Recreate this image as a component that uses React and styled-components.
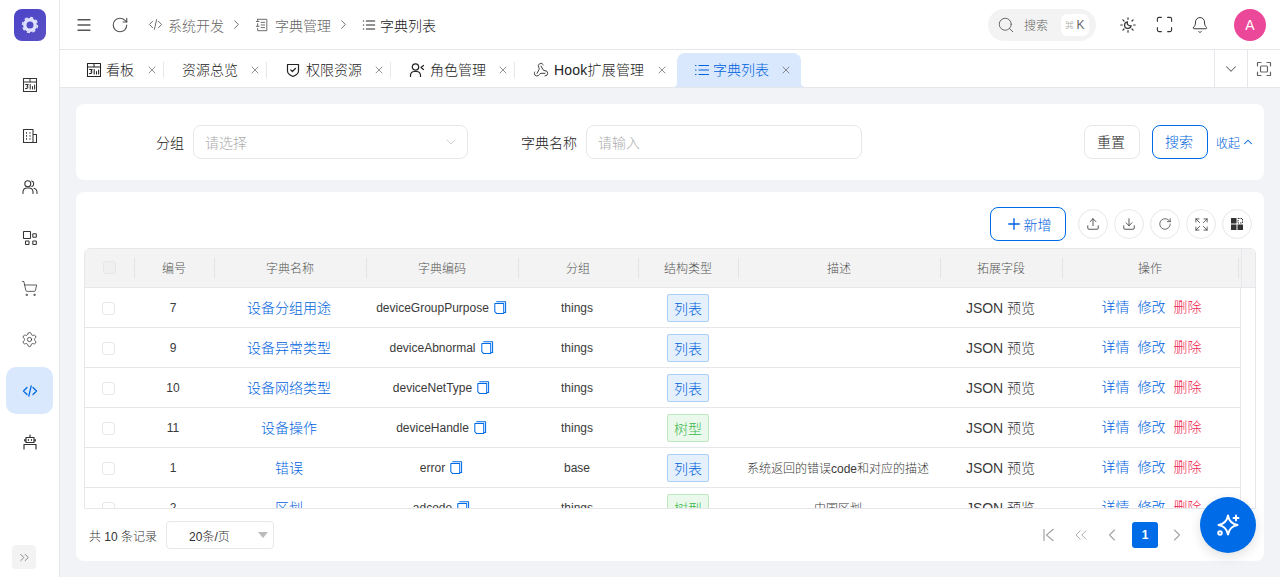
import React from 'react';
import styled, { createGlobalStyle } from 'styled-components';
import {
  Menu, RotateCw, ChevronRight, ChevronDown, ChevronUp, ChevronLeft, ChevronsLeft, ChevronsRight, X, Search, Maximize, Bell,
  Webhook, ShoppingCart, Settings, Upload, Download, Expand, Plus,
} from 'lucide-react';

const BLUE = '#006be6';
const TEXT_BLUE = '#0063de';
const Global = createGlobalStyle`
  html, body { margin: 0; padding: 0; background: #fff; }
  body { font-family: "Liberation Sans", "Noto Sans CJK SC", sans-serif; font-weight: 300; color: #333; }
  * { box-sizing: border-box; }
  svg { flex: none; }
`;

const Shell = styled.div`display: flex; width: 1280px; height: 577px; overflow: hidden; position: relative;`;
const Sidebar = styled.aside`width: 60px; flex: none; border-right: 1px solid #e5e7eb; display: flex; flex-direction: column; align-items: center; padding-top: 9px; position: relative; color: #333;`;
const Logo = styled.div`width: 32px; height: 32px; border-radius: 8px; background: linear-gradient(135deg, #4b44c9, #5a4fc4); display: flex; align-items: center; justify-content: center; margin-bottom: 20px; margin-left: 1px;`;
const SideItem = styled.div`
  width: 47px; height: 47px; flex: none; margin-bottom: 4px; border-radius: 10px; display: flex; align-items: center; justify-content: center;
  background: ${p => (p.$active ? '#d9e8fc' : 'transparent')}; color: ${p => (p.$active ? BLUE : '#333')};
`;
const CollapseBtn = styled.div`position: absolute; left: 12px; bottom: 8px; width: 24px; height: 24px; border-radius: 4px; background: #f3f3f3; color: #888; display: flex; align-items: center; justify-content: center;`;

const Main = styled.main`flex: 1; min-width: 0; display: flex; flex-direction: column;`;
const Header = styled.header`height: 50px; flex: none; border-bottom: 1px solid #e5e7eb; display: flex; align-items: center; padding: 0 14px 0 17px;`;
const HeadBtn = styled.div`width: 14px; display: flex; justify-content: center; color: #555; margin-right: ${p => p.$mr || 0}px;`;
const Crumbs = styled.nav`display: flex; align-items: center; font-size: 14px; flex: 1; color: #666;`;
const Crumb = styled.span`display: flex; align-items: center; gap: ${p => p.$gap || 5}px; color: ${p => (p.$current ? '#222' : '#666')};`;
const CrumbSep = styled.span`display: flex; width: 24px; justify-content: center; margin-right: 7px; color: #666;`;
const SearchPill = styled.div`width: 108px; height: 32px; border-radius: 16px; background: #f3f3f3; display: flex; align-items: center; padding-left: 9px; font-size: 12px; color: #666; margin-right: 25px;`;
const PillText = styled.span`margin-left: 9px;`;
const Kbd = styled.span`width: 28px; height: 22px; margin-left: 13px; border-radius: 6px; background: #fff; display: flex; align-items: center; justify-content: center; gap: 3px; font-size: 12px; color: #666;`;
const KbdMark = styled.span`font-size: 8px;`;
const ToolIcon = styled.div`width: 14px; display: flex; justify-content: center; color: #333; margin-right: ${p => p.$mr || 22}px;`;
const Avatar = styled.div`width: 32px; height: 32px; border-radius: 50%; background: #ec4899; color: #fff; font-size: 14px; font-weight: 400; display: flex; align-items: center; justify-content: center; margin-left: -2px;`;

const TabBar = styled.div`height: 38px; flex: none; border-bottom: 1px solid #e5e7eb; display: flex; padding-left: 8px;`;
const TabList = styled.div`flex: 1; display: flex; align-items: flex-end;`;
const Tab = styled.div`
  height: ${p => (p.$active ? 34 : 37)}px; display: flex; align-items: center; padding: ${p => (p.$active ? '0 9px 1px 17px' : `2px ${p.$pr || 6}px 0 18px`)};
  font-size: 14px; position: relative; flex: none; width: ${p => p.$w}px;
  color: ${p => (p.$active ? TEXT_BLUE : '#222')};
  background: ${p => (p.$active ? '#d9e8fc' : 'transparent')};
  border-radius: ${p => (p.$active ? '8px 8px 0 0' : '0')};
  &::after { content: ''; display: ${p => (p.$divider ? 'block' : 'none')}; position: absolute; right: 0; top: 12px; height: 16px; width: 1px; background: #e5e7eb; }
`;
const TabFlare = styled.span`
  position: absolute; bottom: 0; width: 5px; height: 5px;
  ${p => (p.$side === 'left' ? 'left: -5px;' : 'right: -5px;')}
  background: radial-gradient(circle at ${p => (p.$side === 'left' ? '0 0' : '100% 0')}, transparent 5px, #d9e8fc 5.500px);
`;
const TabText = styled.span`flex: 1; white-space: nowrap; margin-left: ${p => p.$gap}px; padding-bottom: 2px; letter-spacing: ${p => p.$track || 0}px;`;
const TabClose = styled.span`display: flex; width: 12px; justify-content: center; color: #444;`;
const TabTool = styled.div`width: 33px; flex: none; border-left: 1px solid #e5e7eb; display: flex; align-items: center; justify-content: center; color: #666;`;

const Content = styled.div`flex: 1; min-height: 0; background: #f1f3f7; padding: 16px; display: flex; flex-direction: column; gap: 12px;`;
const FormPanel = styled.section`height: 76px; flex: none; background: #fff; border-radius: 8px; display: flex; align-items: center; padding-right: 10px;`;
const Field = styled.div`width: ${p => p.$w}px; display: flex; align-items: center; font-size: 14px;`;
const FieldLabel = styled.label`width: ${p => p.$w}px; text-align: right; margin-right: 9px; color: #222; flex: none;`;
const Control = styled.div`flex: 1; height: 34px; border: 1px solid #e5e7eb; border-radius: 8px; display: flex; align-items: center; justify-content: space-between; padding: 0 8px 0 11px; color: #aaa;`;
const FormActions = styled.div`margin-left: auto; display: flex; align-items: center;`;
const FormBtn = styled.button`
  width: 56px; height: 34px; border-radius: 8px; background: #fff; font: inherit; font-size: 14px; padding: 0 2px 2px 0; margin-right: ${p => p.$mr}px;
  border: 1px solid ${p => (p.$primary ? BLUE : '#e5e7eb')}; color: ${p => (p.$primary ? TEXT_BLUE : '#222')};
`;
const Collapse = styled.span`display: flex; align-items: center; gap: 1px; color: ${TEXT_BLUE}; font-size: 12px; width: 38px; white-space: nowrap;`;

const TablePanel = styled.section`flex: 1; min-height: 0; background: #fff; border-radius: 8px; padding: 15px 8px 0; display: flex; flex-direction: column; position: relative;`;
const Toolbar = styled.div`display: flex; align-items: center; justify-content: flex-end; height: 34px; flex: none; padding-right: 4px; gap: 6px; margin-bottom: 7px;`;
const AddBtn = styled.button`width: 76px; height: 34px; margin-right: 6px; border: 1px solid ${BLUE}; border-radius: 8px; background: #fff; color: ${TEXT_BLUE}; font: inherit; font-size: 14px; display: flex; align-items: center; justify-content: center; gap: 1px; padding: 0;`;
const RoundBtn = styled.div`width: 30px; height: 30px; border: 1px solid #e5e7eb; border-radius: 50%; display: flex; align-items: center; justify-content: center; color: #333;`;

const TableWrap = styled.div`height: 261px; flex: none; overflow: hidden; border: 1px solid #e5e7eb; border-radius: 6px 6px 0 0;`;
const COLS = '50px 80px 152px 152px 120px 100px 202px 122px 176px';
const HeadRow = styled.div`display: grid; grid-template-columns: ${COLS} 2px 1fr; height: 39px; background: #f3f3f3; border-bottom: 1px solid #e5e7eb; font-size: 12px; color: #555;`;
const HeadCell = styled.div`
  display: flex; align-items: center; justify-content: center; padding: 0 2px 1px 0; position: relative;
  &::after { content: ''; position: absolute; right: 0; top: 9px; height: 20px; width: 1px; background: #e3e3e3; }
`;
const HeadFill = styled.div`grid-column: 11; border-left: 1px solid #e5e7eb;`;
const BodyRow = styled.div`display: grid; grid-template-columns: ${COLS} 2px; width: 1156px; height: 40px; border-bottom: 1px solid #e5e7eb; border-right: 1px solid #e5e7eb; font-size: 12px; color: #333;`;
const Cell = styled.div`
  display: flex; align-items: center; justify-content: center; padding: 0 ${p => p.$pr ?? 4}px ${p => (p.$size ? 2 : 0)}px 0;
  font-size: ${p => p.$size || 12}px; gap: 3px; white-space: nowrap; color: ${p => p.$color || '#3a3a3a'};
`;
const Check = styled.span`width: 13px; height: 13px; margin-top: ${p => (p.$head ? 0 : 2)}px; border: 1px solid #e5e7eb; border-radius: 3px; background: ${p => (p.$head ? '#f0f0f0' : '#fff')};`;
const Tag = styled.span`
  width: 42px; height: 28px; border-radius: 2px; font-size: 14px; margin-left: 2px; display: flex; align-items: center; justify-content: center;
  border: 1px solid ${p => (p.$tree ? '#bce8c0' : '#aacff8')};
  background: ${p => (p.$tree ? '#ebf9ed' : '#e5f0fd')};
  color: ${p => (p.$tree ? '#3fba50' : TEXT_BLUE)};
`;
const Ops = styled.div`display: flex; align-items: center; justify-content: center; gap: 8px; font-size: 14px; padding: 0 0 3px 1px;`;
const Op = styled.span`color: ${p => (p.$danger ? '#f0244e' : TEXT_BLUE)};`;
const CopyWrap = styled.span`color: ${BLUE}; display: flex;`;

const Footer = styled.div`flex: 1; display: flex; align-items: center; padding-left: 5px; font-size: 12px; color: #333;`;
const PageSize = styled.div`width: 108px; height: 28px; margin-left: 9px; border: 1px solid #e5e7eb; border-radius: 4px; display: flex; align-items: center; padding: 0 0 0 22px; position: relative;`;
const Caret = styled.span`position: absolute; right: 5px; top: 10px; width: 0; height: 0; border: 5px solid transparent; border-top: 6px solid #bbb; border-bottom: 0;`;
const Pager = styled.div`display: flex; align-items: center; margin: 0 70px 0 auto; color: #a5a5a5;`;
const PageIcon = styled.span`width: 18px; display: flex; justify-content: center; margin-right: ${p => p.$mr}px;`;
const PageNum = styled.span`width: 26px; height: 26px; border-radius: 3px; background: ${BLUE}; color: #fff; font-weight: 700; display: flex; align-items: center; justify-content: center; margin-right: 10px;`;
const Fab = styled.div`position: absolute; left: 1200px; top: 497px; width: 56px; height: 56px; border-radius: 50%; background: ${BLUE}; box-shadow: 0 4px 12px rgba(0,0,0,.12); display: flex; align-items: center; justify-content: center;`;

const Ico = ({ size = 16, sw = 1.2, children }) => (
  <svg width={size} height={size} viewBox="0 0 16 16" fill="none" stroke="currentColor" strokeWidth={sw} strokeLinecap="round" strokeLinejoin="round">{children}</svg>
);
const CalIcon = ({ size }) => (
  <Ico size={size} sw={1.05}>
    <rect x="1.500" y="1.500" width="13" height="13" strokeLinecap="square" />
    <path d="M1.500 5h13M8 1.500V5M3.600 7.400h2.600L5 9.200c1.300 0 1.500 2.600-1.500 2.400M8.200 7.600v4.400M10.500 9.500V12M12.600 8v4" />
  </Ico>
);
const BuildingIcon = () => (
  <Ico sw={1.05}><path d="M1.500 14.500v-13h9.500v13zM11 6.500h3.500v8H11M4.500 4.500v.8M8 4.500v.8M4.500 7.500v.8M8 7.500v.8M4.500 10.500v.8M8 10.500v.8" /></Ico>
);
const UsersIcon = () => (
  <Ico sw={1.05}><circle cx="5.800" cy="4.700" r="3" /><path d="M1 14.500v-2A4 4 0 0 1 5 9h2a4 4 0 0 1 4 3.500v2M9.800 1.900a3 3 0 0 1 0 5.600M12 9.200a4 4 0 0 1 3 3.300v2" /></Ico>
);
const AppsIcon = () => (
  <Ico sw={1.05}><rect x="1.500" y="1.500" width="7" height="7" rx=".5" /><rect x="10.800" y="3.800" width="3.500" height="3.500" rx=".5" /><rect x="3.500" y="11" width="3.500" height="3.500" rx=".5" /><rect x="10.800" y="11" width="3.500" height="3.500" rx=".5" /></Ico>
);
const BotIcon = () => (
  <Ico sw={1.2}><path d="M8 1v2M4 3.500h8v5H4zM2.700 5.500v1.500M13.300 5.500v1.500M6.500 5.500v.8M9.500 5.500v.8M2 15v-4.500h12V15" /></Ico>
);
const CodeSlash = ({ size = 16, sw = 1.3 }) => (
  <Ico size={size} sw={sw}><path d="M5 4.500 1.500 8 5 11.500M11 4.500 14.500 8 11 11.500M9.200 2.800 6.800 13.200" /></Ico>
);
const BookIcon = () => (
  <Ico size={14} sw={1.1}><path d="M3 1.500h10.500v13H3V12M3 4V1.500M3 6.500V9.500M1.500 4h3M1.500 9.500h3M7 5h4M7 8h4M7 11h4" /></Ico>
);
const ListIcon = ({ size = 14 }) => (
  <Ico size={size} sw={1.2}><path d="M5 3.500h9.500M5 8h9.500M5 12.500h9.500M1.500 3.500h.5M1.500 8h.5M1.500 12.500h.5" /></Ico>
);
const ShieldIcon = () => (
  <Ico sw={1.2}><path d="M2.500 2.500h11v6.500c0 3-3 4.500-5.500 5.500C5.500 13.500 2.500 12 2.500 9z" /><path d="m5.700 7.800 1.700 1.700 3-3" /></Ico>
);
const RoleIcon = () => (
  <Ico sw={1.2}><circle cx="6.500" cy="5" r="3.200" /><path d="M1.500 14.500v-1.500a4 4 0 0 1 4-3.500h2a4 4 0 0 1 4 3.500v1.500M14.500 3.500 12 5.500l2.500 2" /></Ico>
);
const FocusIcon = () => (
  <Ico sw={1.2}><path d="M1.500 5V1.500H5M11 1.500h3.500V5M14.500 11v3.500H11M5 14.500H1.500V11" /><rect x="4.500" y="5" width="7" height="6" rx="1" /></Ico>
);
const ThemeIcon = () => (
  <Ico sw={1.2}><path d="M8 .8v1.500M8 13.700v1.500M.8 8h1.500M13.700 8h1.500M2.900 2.900 4 4M12 12l1.100 1.100M2.900 13.100 4 12M12 4l1.100-1.100" /><path d="M7.500 4.800a3.300 3.300 0 1 0 3.600 3.800 2.800 2.800 0 0 1-3.600-3.800z" /></Ico>
);
const CopyIcon = () => (
  <CopyWrap><Ico size={15} sw={1.1}><path d="M5 1.800h9.500v11.500H13" /><path d="M3 3.800h9.500v10.700H5l-2-2z" /></Ico></CopyWrap>
);
const GridIcon = () => (
  <svg width="14" height="14" viewBox="0 0 14 14" fill="#333"><rect x="1" y="1" width="5.500" height="5.500" /><rect x="1" y="7.500" width="5.500" height="5.500" /><rect x="7.500" y="7.500" width="5.500" height="5.500" /><rect x="8" y="1.500" width="4.500" height="4.500" fill="none" stroke="#333" strokeDasharray="1.500 1" /></svg>
);
const StarIcon = () => (
  <svg width="24" height="24" viewBox="0 0 24 24" fill="none" stroke="#fff" strokeWidth="1.900" strokeLinecap="round" strokeLinejoin="round">
    <path d="M12 2.500C13 8 16 11 21.500 12 16 13 13 16 12 21.500 11 16 8 13 2.500 12 8 11 11 8 12 2.500Z" />
    <path d="M20 2.500v5M17.500 5h5" /><circle cx="4" cy="20" r="1.800" />
  </svg>
);
const LogoGear = () => (
  <svg width="20" height="20" viewBox="0 0 20 20" fill="none"><circle cx="10" cy="10" r="5.200" stroke="#dfe0fb" strokeWidth="3.400" /><circle cx="10" cy="10" r="7.400" stroke="#dfe0fb" strokeWidth="1.600" strokeDasharray="3.200 2.600" /></svg>
);
const FirstIcon = () => (
  <svg width="14" height="14" viewBox="0 0 14 14" fill="none" stroke="currentColor" strokeWidth="1.200"><path d="M2 1v12M11.500 1 4.500 7l7 6" /></svg>
);

const tabs = [
  { t: '看板', icon: <CalIcon />, w: 96, d: 1, gap: 4 },
  { t: '资源总览', w: 103, d: 1, gap: 0 },
  { t: '权限资源', icon: <ShieldIcon />, w: 124, d: 1, gap: 5 },
  { t: '角色管理', icon: <RoleIcon />, w: 124, d: 1, gap: 5 },
  { t: 'Hook扩展管理', icon: <Webhook size={16} strokeWidth={1.3} />, w: 162, gap: 5, pr: 9, track: 0.2 },
  { t: '字典列表', icon: <ListIcon size={16} />, w: 124, active: 1, gap: 3 },
];
const rows = [
  ['7', '设备分组用途', 'deviceGroupPurpose', 'things', '列表', ''],
  ['9', '设备异常类型', 'deviceAbnormal', 'things', '列表', ''],
  ['10', '设备网络类型', 'deviceNetType', 'things', '列表', ''],
  ['11', '设备操作', 'deviceHandle', 'things', '树型', ''],
  ['1', '错误', 'error', 'base', '列表', '系统返回的错误code和对应的描述'],
  ['2', '区划', 'adcode', 'things', '树型', '中国区划'],
];
const heads = ['编号', '字典名称', '字典编码', '分组', '结构类型', '描述', '拓展字段', '操作'];

export default function App() {
  return (
    <Shell>
      <Global />
      <Sidebar>
        <Logo><LogoGear /></Logo>
        <SideItem><CalIcon /></SideItem>
        <SideItem><BuildingIcon /></SideItem>
        <SideItem><UsersIcon /></SideItem>
        <SideItem><AppsIcon /></SideItem>
        <SideItem><ShoppingCart size={17} strokeWidth={1.1} /></SideItem>
        <SideItem><Settings size={17} strokeWidth={1.1} /></SideItem>
        <SideItem $active><CodeSlash /></SideItem>
        <SideItem><BotIcon /></SideItem>
        <CollapseBtn><ChevronsRight size={15} strokeWidth={1.6} /></CollapseBtn>
      </Sidebar>
      <Main>
        <Header>
          <HeadBtn $mr={22}><Menu size={18} strokeWidth={1.7} /></HeadBtn>
          <HeadBtn $mr={21}><RotateCw size={18} strokeWidth={1.5} /></HeadBtn>
          <Crumbs>
            <Crumb><CodeSlash size={15} sw={1} />系统开发</Crumb>
            <CrumbSep><ChevronRight size={15} strokeWidth={1.5} /></CrumbSep>
            <Crumb $gap={6}><BookIcon />字典管理</Crumb>
            <CrumbSep><ChevronRight size={15} strokeWidth={1.5} /></CrumbSep>
            <Crumb $current $gap={4}><ListIcon />字典列表</Crumb>
          </Crumbs>
          <SearchPill>
            <Search size={18} strokeWidth={1.3} />
            <PillText>搜索</PillText>
            <Kbd><KbdMark>⌘</KbdMark><span>K</span></Kbd>
          </SearchPill>
          <ToolIcon><ThemeIcon /></ToolIcon>
          <ToolIcon><Maximize size={19} strokeWidth={1.4} /></ToolIcon>
          <ToolIcon $mr={29}><Bell size={18} strokeWidth={1.3} /></ToolIcon>
          <Avatar>A</Avatar>
        </Header>
        <TabBar>
          <TabList>
            {tabs.map(t => (
              <Tab key={t.t} $w={t.w} $active={t.active} $divider={t.d} $pr={t.pr}>
                {t.icon}
                <TabText $gap={t.gap} $track={t.track}>{t.t}</TabText>
                <TabClose><X size={12} strokeWidth={1.2} /></TabClose>
                {t.active && <><TabFlare $side="left" /><TabFlare $side="right" /></>}
              </Tab>
            ))}
          </TabList>
          <TabTool><ChevronDown size={18} strokeWidth={1.4} /></TabTool>
          <TabTool><FocusIcon /></TabTool>
        </TabBar>
        <Content>
          <FormPanel>
            <Field $w={392}>
              <FieldLabel $w={108}>分组</FieldLabel>
              <Control>请选择<ChevronDown size={16} strokeWidth={1} color="#bbb" /></Control>
            </Field>
            <Field $w={394}>
              <FieldLabel $w={109}>字典名称</FieldLabel>
              <Control>请输入</Control>
            </Field>
            <FormActions>
              <FormBtn $mr={12}>重置</FormBtn>
              <FormBtn $primary $mr={8}>搜索</FormBtn>
              <Collapse>收起<ChevronUp size={14} strokeWidth={1.8} /></Collapse>
            </FormActions>
          </FormPanel>
          <TablePanel>
            <Toolbar>
              <AddBtn><Plus size={18} strokeWidth={1.8} />新增</AddBtn>
              <RoundBtn><Upload size={14} strokeWidth={1.4} /></RoundBtn>
              <RoundBtn><Download size={14} strokeWidth={1.4} /></RoundBtn>
              <RoundBtn><RotateCw size={14} strokeWidth={1.2} /></RoundBtn>
              <RoundBtn><Expand size={15} strokeWidth={1.2} /></RoundBtn>
              <RoundBtn><GridIcon /></RoundBtn>
            </Toolbar>
            <TableWrap>
              <HeadRow>
                <HeadCell><Check $head /></HeadCell>
                {heads.map(h => <HeadCell key={h}>{h}</HeadCell>)}
                <HeadFill />
              </HeadRow>
              {rows.map(r => (
                <BodyRow key={r[0]}>
                  <Cell><Check /></Cell>
                  <Cell>{r[0]}</Cell>
                  <Cell $size={14} $color={TEXT_BLUE}>{r[1]}</Cell>
                  <Cell $pr={3}>{r[2]}<CopyIcon /></Cell>
                  <Cell>{r[3]}</Cell>
                  <Cell><Tag $tree={r[4] === '树型'}>{r[4]}</Tag></Cell>
                  <Cell>{r[5]}</Cell>
                  <Cell $size={14} $pr={3}>JSON 预览</Cell>
                  <Ops><Op>详情</Op><Op>修改</Op><Op $danger>删除</Op></Ops>
                </BodyRow>
              ))}
            </TableWrap>
            <Footer>
              <span>共 10 条记录</span>
              <PageSize>20条/页<Caret /></PageSize>
              <Pager>
                <PageIcon $mr={14}><FirstIcon /></PageIcon>
                <PageIcon $mr={13}><ChevronsLeft size={20} strokeWidth={1.1} /></PageIcon>
                <PageIcon $mr={11}><ChevronLeft size={20} strokeWidth={1.3} /></PageIcon>
                <PageNum>1</PageNum>
                <PageIcon $mr={0}><ChevronRight size={20} strokeWidth={1.3} /></PageIcon>
              </Pager>
            </Footer>
          </TablePanel>
        </Content>
      </Main>
      <Fab><StarIcon /></Fab>
    </Shell>
  );
}
